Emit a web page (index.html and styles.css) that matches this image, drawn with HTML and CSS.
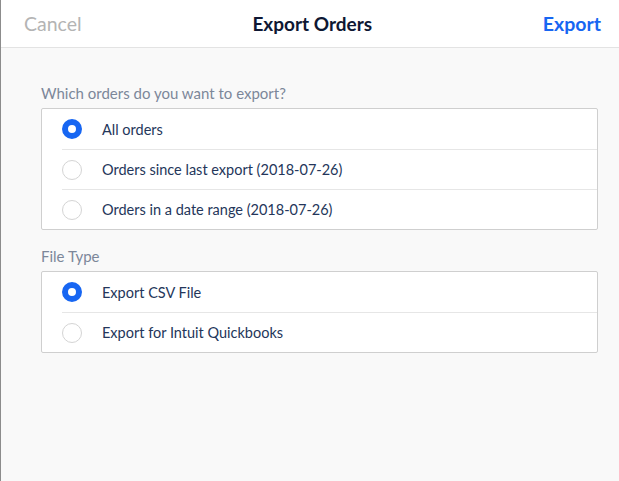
FILE: index.html
```html
<!DOCTYPE html>
<html lang="en">
<head>
  <meta charset="UTF-8" />
  <meta name="viewport" content="width=device-width, initial-scale=1.0"/>
  <title>Export Orders</title>
  <link rel="stylesheet" href="styles.css">
</head>
<body>
  <div class="sheet">
    <header class="topbar">
      <button class="link cancel">Cancel</button>
      <h1>Export Orders</h1>
      <button class="link export">Export</button>
    </header>

    <main class="content">
      <p class="label">Which orders do you want to export?</p>
      <div class="card">
        <label class="row">
          <input type="radio" name="orders" checked />
          <span>All orders</span>
        </label>
        <label class="row">
          <input type="radio" name="orders" />
          <span>Orders since last export (2018-07-26)</span>
        </label>
        <label class="row">
          <input type="radio" name="orders" />
          <span>Orders in a date range (2018-07-26)</span>
        </label>
      </div>

      <p class="label">File Type</p>
      <div class="card">
        <label class="row">
          <input type="radio" name="type" checked />
          <span>Export CSV File</span>
        </label>
        <label class="row">
          <input type="radio" name="type" />
          <span>Export for Intuit Quickbooks</span>
        </label>
      </div>
    </main>
  </div>
</body>
</html>
```

FILE: styles.css
```css
body {
  margin: 0;
  font-family: 'Lato', sans-serif;
  background: #f9f9f9;
}

.sheet {
  min-height: 481px;
  border-left: 1px solid #8c8c8c;
  box-sizing: border-box;
}

.topbar {
  display: flex;
  align-items: center;
  justify-content: space-between;
  height: 47px;
  padding: 0 18px 0 23px;
  background: #fff;
  border-bottom: 1px solid #e3e3e3;
}

.topbar h1 {
  margin: 0;
  font-size: 19px;
  font-weight: 700;
  color: #0e1733;
}

.link {
  border: none;
  background: none;
  padding: 0;
  font-family: inherit;
  font-size: 19.5px;
  cursor: pointer;
}

.cancel {
  color: #b4b4b4;
}

.export {
  color: #1766f2;
  font-weight: 700;
}

.content {
  padding: 36px 21px 0 40px;
}

.label {
  margin: 0 0 6px;
  font-size: 15px;
  color: #7c8799;
}

.card {
  background: #fff;
  border: 1px solid #cfcfcf;
  border-radius: 2px;
  margin-bottom: 17px;
}

.row {
  display: flex;
  align-items: center;
  gap: 20px;
  height: 39px;
  margin-left: 20px;
  font-size: 14.5px;
  color: #24365a;
  border-top: 1px solid #e6e6e6;
  cursor: pointer;
}

.row:first-child {
  border-top: none;
  height: 40px;
}

.row input {
  appearance: none;
  margin: 0;
  width: 20px;
  height: 20px;
  border-radius: 50%;
  border: 1.5px solid #d4d4d4;
  background: #fff;
  box-sizing: border-box;
}

.row input:checked {
  border: 6.5px solid #1766f2;
}
```
